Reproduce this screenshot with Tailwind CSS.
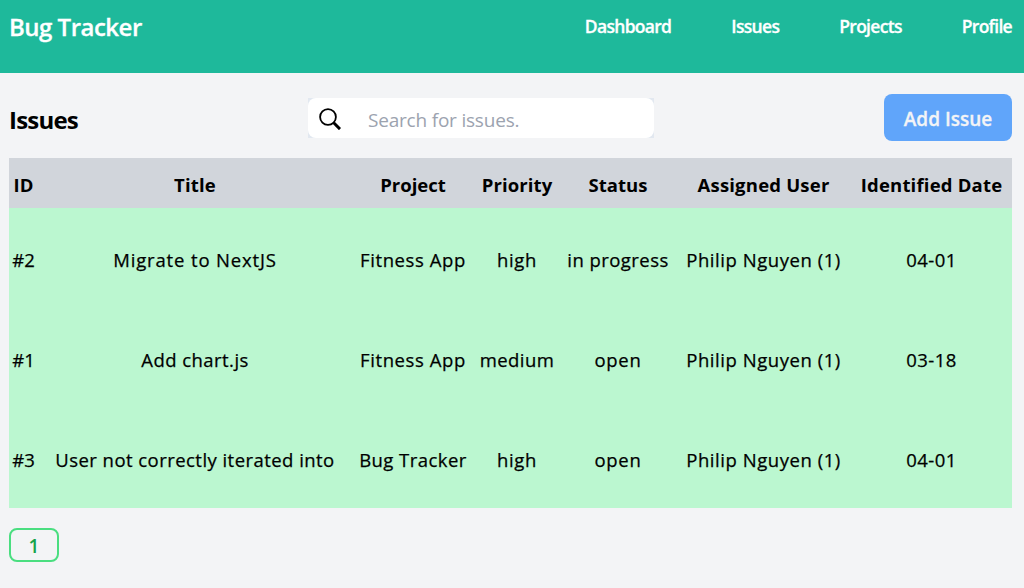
<!DOCTYPE html>
<html lang="en">
<head>
<meta charset="utf-8">
<title>Bug Tracker</title>
<script src="https://cdn.jsdelivr.net/npm/@tailwindcss/browser@4"></script>
</head>
<body class="h-[588px] overflow-hidden bg-[#f3f4f6] font-['Open_Sans','Noto_Sans',sans-serif] text-black">
<header class="flex h-[73px] items-start justify-between bg-[#1eb99b] pl-[9px] pr-3 text-white">
  <h1 class="mt-[9px] text-[24px] leading-9 font-semibold tracking-[-0.5px] whitespace-nowrap [-webkit-text-stroke:0.3px]">Bug Tracker</h1>
  <nav class="mt-3 flex gap-[60px] text-[17.5px] leading-7 font-semibold tracking-[-0.7px] [-webkit-text-stroke:0.3px]">
    <a>Dashboard</a><a>Issues</a><a>Projects</a><a>Profile</a>
  </nav>
</header>
<main class="pl-[9px] pr-3">
  <section class="flex h-[85px] items-start">
    <h2 class="mt-[29px] w-[299px] text-[24px] leading-9 font-bold tracking-[-0.8px]">Issues</h2>
    <div class="mt-[25px] w-[346px] bg-[#e2e8f0]">
      <label class="flex h-10 items-center rounded-lg bg-white pl-[11px]">
        <svg class="mt-px h-[22px] w-[22px] shrink-0" viewBox="0 0 22 22" fill="none" stroke="#000"><circle cx="9" cy="9" r="7.9" stroke-width="1.8"/><path d="M14.7 14.8L21 21.1" stroke-width="3"/></svg>
        <input class="mt-[3px] ml-[27px] w-[270px] text-[19px] leading-7 tracking-[-0.2px] outline-none placeholder:text-[#9ca3af]" placeholder="Search for issues.">
      </label>
    </div>
    <button class="mt-[21px] ml-auto h-[47px] w-32 rounded-lg bg-[#60a5fa] pt-[3px] text-[19px] leading-7 font-semibold whitespace-nowrap text-[#f3f4f6] [-webkit-text-stroke:0.3px]">Add Issue</button>
  </section>
  <table class="w-[1003px] table-fixed text-center whitespace-nowrap">
    <colgroup><col class="w-[29px]"><col class="w-[314px]"><col class="w-[122px]"><col class="w-[86px]"><col class="w-[116px]"><col class="w-[175px]"><col class="w-[161px]"></colgroup>
    <thead class="bg-[#d1d5db] text-[18.5px] leading-7 tracking-[0.2px]">
      <tr class="h-[50px]"><th class="p-0 pt-1">ID</th><th class="p-0 pt-1">Title</th><th class="p-0 pt-1 tracking-[0]">Project</th><th class="p-0 pt-1 tracking-[0.1px]">Priority</th><th class="p-0 pt-1 tracking-[0]">Status</th><th class="p-0 pt-1">Assigned User</th><th class="p-0 pt-1">Identified Date</th></tr>
    </thead>
    <tbody class="bg-[#bbf7d0] text-[18.5px] leading-7 font-medium tracking-[0.45px] [-webkit-text-stroke:0.25px]">
      <tr class="h-[100px]"><td class="p-0 pt-1 tracking-[0]">#2</td><td class="p-0 pt-1 tracking-[0.85px]">Migrate to NextJS</td><td class="p-0 pt-1 tracking-[0.6px]">Fitness App</td><td class="p-0 pt-1 tracking-[0.7px]">high</td><td class="p-0 pt-1">in progress</td><td class="p-0 pt-1 tracking-[0.55px]">Philip Nguyen (1)</td><td class="p-0 pt-1">04-01</td></tr>
      <tr class="h-[100px]"><td class="p-0 pt-1 tracking-[0]">#1</td><td class="p-0 pt-1">Add chart.js</td><td class="p-0 pt-1 tracking-[0.6px]">Fitness App</td><td class="p-0 pt-1">medium</td><td class="p-0 pt-1 tracking-[0.7px]">open</td><td class="p-0 pt-1 tracking-[0.55px]">Philip Nguyen (1)</td><td class="p-0 pt-1">03-18</td></tr>
      <tr class="h-[100px]"><td class="p-0 pt-1 tracking-[0]">#3</td><td class="p-0 pt-1">User not correctly iterated into</td><td class="p-0 pt-1">Bug Tracker</td><td class="p-0 pt-1 tracking-[0.7px]">high</td><td class="p-0 pt-1 tracking-[0.7px]">open</td><td class="p-0 pt-1 tracking-[0.55px]">Philip Nguyen (1)</td><td class="p-0 pt-1">04-01</td></tr>
    </tbody>
  </table>
  <button class="mt-5 flex h-[34px] w-[50px] items-center justify-center rounded-lg border-2 border-[#4ade80] pt-0.5 text-[19px] leading-7 font-semibold text-[#16a34a]">1</button>
</main>
</body>
</html>
